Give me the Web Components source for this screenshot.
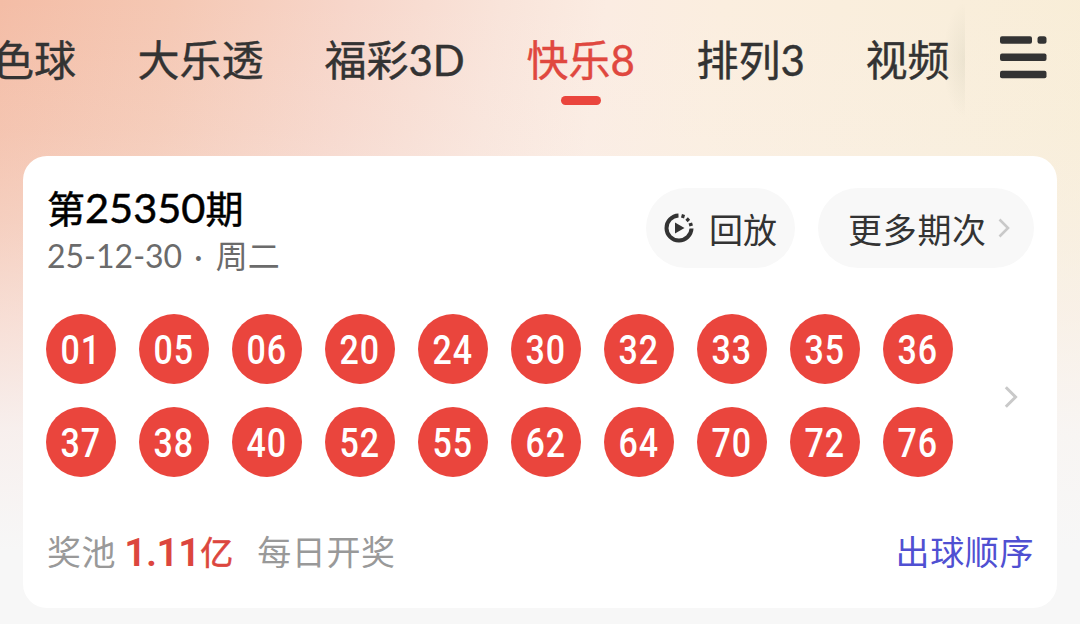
<!DOCTYPE html>
<html lang="zh-CN">
<head>
<meta charset="utf-8">
<title>快乐8</title>
<style>
html,body{margin:0;width:1080px;height:624px;overflow:hidden;background:#f7f7f7;font-family:Lato,"Noto Sans CJK SC",sans-serif}
</style>
</head>
<body>
<lottery-page></lottery-page>
<script>
const define = (name, html, setup) => customElements.define(name, class extends HTMLElement {
  constructor() {
    super();
    this.attachShadow({mode: 'open'}).innerHTML = html;
  }
  connectedCallback() { if (setup) setup(this, this.shadowRoot); }
});

define('lottery-tab', `<style>
:host{display:block;white-space:nowrap;font-size:42px;line-height:60px;color:#333;-webkit-text-stroke:.4px currentColor;position:relative}
:host([active]){color:#e0483f}
:host([active])::after{content:"";position:absolute;left:50%;margin-left:-20px;top:66px;width:40px;height:9px;border-radius:5px;background:#ea453d}
</style><slot></slot>`);

define('menu-icon', `<style>:host{display:block;width:47px;height:44px}svg{display:block}</style>
<svg width="47" height="44" viewBox="0 0 47 44" fill="#333"><rect y=".3" width="32" height="7.500" rx="2"/><rect x="37.500" y=".3" width="9" height="7.500" rx="2.500"/><rect y="17.600" width="46.500" height="7.500" rx="2"/><rect y="34.800" width="46.500" height="7.500" rx="2"/></svg>`);

define('tab-bar', `<style>
:host{display:block;height:156px;box-sizing:border-box;padding-top:30px;overflow:hidden;background:radial-gradient(ellipse 22px 58px at 100% 50%,rgba(120,130,100,.1),rgba(120,130,100,0)) 941px 0/24px 120px no-repeat}
nav{display:grid;grid-template-columns:137.500px 187px 202px 170px 169px 134.500px 47px;align-items:start}
.first{margin-left:-50px}
menu-icon{margin-top:6px}
</style><nav>
<lottery-tab class="first">双色球</lottery-tab><lottery-tab>大乐透</lottery-tab><lottery-tab>福彩3D</lottery-tab><lottery-tab active style="width:109px">快乐8</lottery-tab><lottery-tab>排列3</lottery-tab><lottery-tab>视频</lottery-tab><menu-icon></menu-icon></nav>`);

define('chevron-icon', `<style>:host{display:block}svg{display:block}</style>
<svg width="12" height="20" viewBox="0 0 12 20" fill="none" stroke="#c9c9c9" stroke-width="2.600"><path d="M1.500 1.500 10 10 1.500 18.500"/></svg>`);

define('replay-icon', `<style>:host{display:block}svg{display:block}</style>
<svg width="30" height="30" viewBox="0 0 30 30" fill="none" stroke="#333" stroke-width="4"><path d="M14.500 2.500A12.500 12.500 0 1 0 27.500 15.500"/><path d="M18.500 5 19.500 1.500M22.500 8 25 5.500M25 12 28.500 11" stroke-width="3.200"/><path d="M11 9.500 20.500 15 11 20.500Z" fill="#333" stroke="none"/></svg>`);

define('pill-button', `<style>
:host{display:flex;align-items:center;box-sizing:border-box;height:80px;border-radius:40px;background:#f8f8f8;color:#333;font-size:34px;line-height:50px;white-space:nowrap}
::slotted(span){padding-top:3px}
</style><slot></slot>`);

define('lottery-ball', `<style>
:host{display:flex;align-items:center;justify-content:center;width:70px;height:70px;border-radius:50%;background:#ea453d;color:#fff;font:500 40px/70px Roboto,sans-serif}
span{display:block;transform:scaleX(.85);letter-spacing:1px;margin-right:0;padding-top:3px}
</style><span><slot></slot></span>`);

define('ball-grid', `<style>
:host{display:grid;grid-template-columns:repeat(10,70px);grid-auto-rows:70px;gap:23px}
</style>`, (el, root) => {
  for (const n of el.getAttribute('numbers').split(' ')) {
    const b = document.createElement('lottery-ball');
    b.textContent = n;
    root.append(b);
  }
});

define('draw-card', `<style>
:host{display:flex;flex-direction:column;box-sizing:border-box;width:1034px;height:452px;margin-left:23px;padding:32px 23px 0;border-radius:24px;background:#fff}
header{display:flex;height:126px;align-items:flex-start}
.title{flex:1;padding-left:1px}
h1{margin:-3px 0 0;font-size:38px;line-height:44px;font-weight:400;color:#000;-webkit-text-stroke:.5px #000;white-space:nowrap}
h1 span{font-size:41.500px}
time{display:block;font-size:32px;line-height:48px;color:#6b6b6b;white-space:nowrap;margin-top:2px}
time i{font-style:normal;margin:0 5px 0 4px}
.replay{width:149px;padding-left:18px;gap:15px;margin-right:23px}
.more{width:216px;padding-left:30px;gap:11px;letter-spacing:.7px}
section{display:flex;align-items:center;justify-content:space-between;padding-right:17px}
section chevron-icon{transform:scale(1.15);margin-top:3px}
footer{display:flex;margin-top:50px;padding-left:1px;font-size:34px;line-height:50px;letter-spacing:.6px;color:#999;white-space:nowrap}
.amount{display:flex;color:#dc463e;margin-left:8px;width:133px}
.amount b{font:600 39px/52px Roboto,sans-serif;width:76px;letter-spacing:-.5px}
.amount span{font-size:33px;-webkit-text-stroke:.6px currentColor}
.order{margin-left:auto;color:#5050d2}
</style>
<header><div class="title"><h1>第<span>25350</span>期</h1><time>25-12-30<i> · </i>周二</time></div>
<pill-button class="replay"><replay-icon></replay-icon><span>回放</span></pill-button>
<pill-button class="more"><span>更多期次</span><chevron-icon></chevron-icon></pill-button></header>
<section><ball-grid numbers="01 05 06 20 24 30 32 33 35 36 37 38 40 52 55 62 64 70 72 76"></ball-grid><chevron-icon></chevron-icon></section>
<footer><span>奖池</span><span class="amount"><b>1.11</b><span>亿</span></span><span>每日开奖</span><span class="order">出球顺序</span></footer>`);

define('lottery-page', `<style>
:host{display:block;width:1080px;height:624px;background:linear-gradient(180deg,rgba(247,247,247,0) 0,rgba(248,244,244,.12) 130px,rgba(248,244,244,.3) 220px,rgba(249,243,243,.6) 320px,rgba(248,246,247,.87) 430px,#f7f7f7 550px),linear-gradient(98deg,#f4bda6 0,#f5c8b4 15%,#f7d6ca 30%,#f9e4da 43%,#fbece2 52%,#fbeedf 62%,#f9eedb 82%,#f8edd5 100%)}
</style><tab-bar></tab-bar><draw-card></draw-card>`);
</script>
</body>
</html>
